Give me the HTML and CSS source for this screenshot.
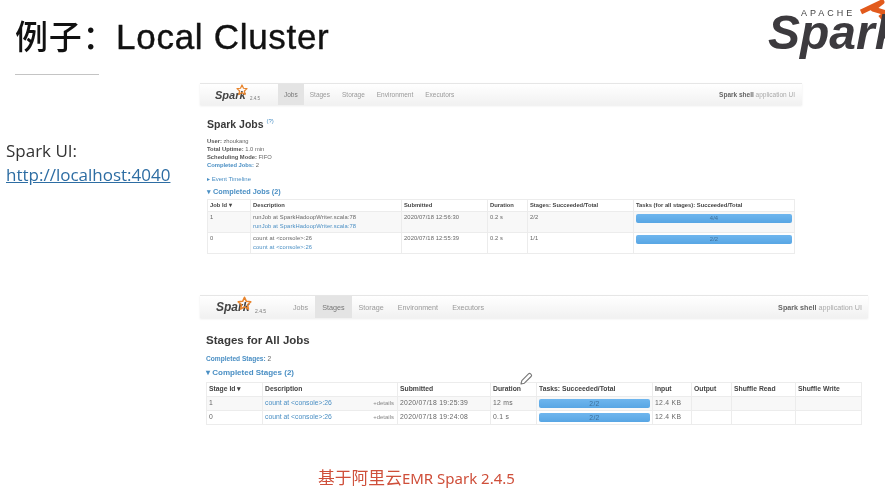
FILE: index.html
```html
<!DOCTYPE html>
<html lang="zh-CN">
<head>
    <meta charset="UTF-8">
    <title>例子&#xFF1A;Local Cluster</title>
    <link rel="stylesheet" href="styles.css">
</head>
<body>
<svg class="defs" width="0" height="0">
    <symbol id="star" viewBox="0 0 24 24">
        <path d="M12 2l3 6.500 7 .8-5.200 4.700 1.500 7L12 17.300l-6.300 3.700 1.500-7L2 9.300l7-.8z" fill="none" stroke="#e8842c" stroke-width="2.500" stroke-linejoin="round"/>
    </symbol>
</svg>
<div class="slide">
    <header class="top">
        <div class="heading">
            <h1 class="title"><span class="title-cjk">例子&#xFF1A;</span>Local Cluster</h1>
            <div class="rule"></div>
        </div>
        <div class="logo">
            <svg class="logo-flame" width="32" height="20" viewBox="0 0 32 20">
                <path d="M3 12L24 2l-9 7 13 4-6 5" fill="none" stroke="#e25a1c" stroke-width="5" stroke-linejoin="round"/>
            </svg>
            <span class="logo-apache">APACHE</span>
            <span class="logo-spark">Spark</span>
        </div>
    </header>

    <div class="main">
        <aside class="side">
            <p>Spark UI:</p>
            <a href="#">http://localhost:4040</a>
        </aside>

        <div class="shots">
            <section class="shot jobs">
                <nav class="nav">
                    <div class="brand">
                        <span class="brand-word">Spark</span>
                        <svg class="brand-star"><use href="#star"/></svg>
                        <span class="brand-ver">2.4.5</span>
                    </div>
                    <a class="tab on">Jobs</a>
                    <a class="tab">Stages</a>
                    <a class="tab">Storage</a>
                    <a class="tab">Environment</a>
                    <a class="tab">Executors</a>
                    <span class="app"><b>Spark shell</b> application UI</span>
                </nav>
                <div class="body">
                    <h2>Spark Jobs <sup>(?)</sup></h2>
                    <ul class="info">
                        <li><b>User:</b> zhoukang</li>
                        <li><b>Total Uptime:</b> 1.0 min</li>
                        <li><b>Scheduling Mode:</b> FIFO</li>
                        <li><a><b>Completed Jobs:</b></a> 2</li>
                    </ul>
                    <p class="timeline"><a>▸ Event Timeline</a></p>
                    <h4><a>▾ Completed Jobs (2)</a></h4>
                    <table>
                        <colgroup>
                            <col class="j1"><col class="j2"><col class="j3"><col class="j4"><col class="j5"><col>
                        </colgroup>
                        <tr>
                            <th>Job Id ▾</th><th>Description</th><th>Submitted</th><th>Duration</th><th>Stages: Succeeded/Total</th><th>Tasks (for all stages): Succeeded/Total</th>
                        </tr>
                        <tr class="odd">
                            <td>1</td>
                            <td>runJob at SparkHadoopWriter.scala:78<br><a>runJob at SparkHadoopWriter.scala:78</a></td>
                            <td>2020/07/18 12:56:30</td><td>0.2 s</td><td>2/2</td>
                            <td><div class="bar">4/4</div></td>
                        </tr>
                        <tr>
                            <td>0</td>
                            <td>count at &lt;console&gt;:26<br><a>count at &lt;console&gt;:26</a></td>
                            <td>2020/07/18 12:55:39</td><td>0.2 s</td><td>1/1</td>
                            <td><div class="bar">2/2</div></td>
                        </tr>
                    </table>
                </div>
            </section>

            <section class="shot stages">
                <nav class="nav">
                    <div class="brand">
                        <span class="brand-word">Spark</span>
                        <svg class="brand-star"><use href="#star"/></svg>
                        <span class="brand-ver">2.4.5</span>
                    </div>
                    <a class="tab">Jobs</a>
                    <a class="tab on">Stages</a>
                    <a class="tab">Storage</a>
                    <a class="tab">Environment</a>
                    <a class="tab">Executors</a>
                    <span class="app"><b>Spark shell</b> application UI</span>
                </nav>
                <div class="body">
                    <h2>Stages for All Jobs</h2>
                    <ul class="info">
                        <li><a><b>Completed Stages:</b></a> 2</li>
                    </ul>
                    <h4><a>▾ Completed Stages (2)</a></h4>
                    <table>
                        <colgroup>
                            <col class="s1"><col class="s2"><col class="s3"><col class="s4"><col class="s5"><col class="s6"><col class="s7"><col class="s8"><col>
                        </colgroup>
                        <tr>
                            <th>Stage Id ▾</th><th>Description</th><th>Submitted</th><th>Duration</th><th>Tasks: Succeeded/Total</th><th>Input</th><th>Output</th><th>Shuffle Read</th><th>Shuffle Write</th>
                        </tr>
                        <tr class="odd">
                            <td>1</td>
                            <td><div class="desc"><a>count at &lt;console&gt;:26</a><span>+details</span></div></td>
                            <td>2020/07/18 19:25:39</td><td>12 ms</td>
                            <td><div class="bar">2/2</div></td>
                            <td>12.4 KB</td><td></td><td></td><td></td>
                        </tr>
                        <tr>
                            <td>0</td>
                            <td><div class="desc"><a>count at &lt;console&gt;:26</a><span>+details</span></div></td>
                            <td>2020/07/18 19:24:08</td><td>0.1 s</td>
                            <td><div class="bar">2/2</div></td>
                            <td>12.4 KB</td><td></td><td></td><td></td>
                        </tr>
                    </table>
                </div>
                <svg class="pencil" width="14" height="14" viewBox="0 0 14 14">
                    <path d="M2 12l.8-3.400L9.500 1.900a1.500 1.500 0 0 1 2.100 0l.5.5a1.500 1.500 0 0 1 0 2.100L5.400 11.200z" fill="#fff" stroke="#777" stroke-width="1.100" stroke-linejoin="round"/>
                </svg>
            </section>

            <p class="caption"><span class="caption-cjk">基于阿里云</span>EMR Spark 2.4.5</p>
        </div>
    </div>
</div>
</body>
</html>
```

FILE: styles.css
```css
html, body {
    margin: 0;
    padding: 0;
    background: #fff;
}

.defs {
    display: block;
    height: 0;
}

.slide {
    width: 885px;
    height: 490px;
    overflow: hidden;
    font-family: "Liberation Sans", "Noto Sans CJK SC", sans-serif;
    filter: blur(0.5px);
}

/* top of the slide */
.top {
    display: flex;
    justify-content: space-between;
    height: 83px;
}

.heading {
    padding: 15px 0 0 15px;
}

.title {
    margin: 0;
    font-size: 35px;
    line-height: 40px;
    font-weight: 400;
    letter-spacing: 0.7px;
    color: #111;
    -webkit-text-stroke: 0.4px #111;
}

.title-cjk {
    font-family: "Noto Sans CJK SC", sans-serif;
    font-size: 33px;
    font-weight: 500;
    -webkit-text-stroke: 0;
}

.rule {
    width: 84px;
    height: 1px;
    margin-top: 17px;
    background: #c4c4c4;
}

.logo {
    position: relative;
    width: 117px;
    height: 62px;
    overflow: hidden;
}

.logo-flame {
    position: absolute;
    left: 90px;
    top: 0;
}

.logo-apache {
    position: absolute;
    left: 33px;
    top: 9px;
    font-size: 9px;
    line-height: 9px;
    letter-spacing: 3px;
    color: #444;
}

.logo-spark {
    position: absolute;
    left: 0;
    top: 18px;
    font-size: 48px;
    line-height: 30px;
    font-style: italic;
    font-weight: 700;
    color: #3c3a3e;
}

/* left column + screenshots */
.main {
    display: flex;
}

.side {
    width: 200px;
    flex: none;
    padding: 56px 0 0 6px;
    box-sizing: border-box;
    font-family: "Open Sans", sans-serif;
    font-size: 17px;
    line-height: 24px;
    color: #333;
}

.side p {
    margin: 0;
}

.side a {
    color: #2d6da3;
    text-decoration: underline;
}

.shots {
    flex: 1;
    min-width: 0;
}

/* the two Spark UI screenshots */
.shot {
    color: #666;
}

.shot a {
    color: #4a8fc4;
}

.nav {
    display: flex;
    align-items: stretch;
    box-sizing: border-box;
    background: linear-gradient(#fff, #f1f1f1);
    border-top: 1px solid #e6e6e6;
    box-shadow: 0 1px 2px rgba(0, 0, 0, 0.08);
}

.brand {
    position: relative;
    flex: none;
}

.brand-word {
    position: absolute;
    font-style: italic;
    font-weight: 700;
    color: #444;
}

.brand-star {
    position: absolute;
}

.brand-ver {
    position: absolute;
    color: #777;
}

.tab {
    display: flex;
    align-items: center;
    color: #999 !important;
}

.tab.on {
    background: #e4e4e4;
    color: #777 !important;
}

.app {
    margin-left: auto;
    align-self: center;
    color: #aaa;
}

.app b {
    color: #666;
}

.shot h2 {
    margin: 0;
    font-weight: 700;
    color: #3a3a3a;
}

.shot h2 sup {
    font-size: 6px;
    font-weight: 400;
    color: #4a8fc4;
}

.info {
    margin: 0;
    padding: 0;
    list-style: none;
}

.info b {
    color: #555;
}

.info a b {
    color: #4a8fc4;
}

.timeline {
    margin: 0;
}

.shot h4 {
    margin: 0;
    font-weight: 700;
}

.shot table {
    border-collapse: collapse;
    table-layout: fixed;
}

.shot th, .shot td {
    border: 1px solid #ececec;
    text-align: left;
    vertical-align: top;
    overflow: hidden;
    white-space: nowrap;
}

.shot th {
    color: #444;
}

.shot tr.odd td {
    background: #f8f8f8;
}

.bar {
    background: linear-gradient(#6fb6ee, #58a6e4);
    border-radius: 2px;
    text-align: center;
    color: #3d6f99;
}

.desc {
    display: flex;
    justify-content: space-between;
    letter-spacing: 0;
}

.desc span {
    padding-right: 1px;
    font-size: 6px;
    color: #888;
}

/* first screenshot: Jobs */
.jobs {
    width: 602px;
    height: 212px;
}

.jobs .nav {
    height: 22px;
    font-size: 6.500px;
}

.jobs .brand {
    width: 78px;
}

.jobs .brand-word {
    left: 15px;
    top: 2px;
    font-size: 11px;
    line-height: 18px;
}

.jobs .brand-star {
    left: 36px;
    top: 0;
    width: 12px;
    height: 12px;
}

.jobs .brand-ver {
    left: 50px;
    top: 12px;
    font-size: 4.500px;
}

.jobs .tab {
    padding: 0 6px;
}

.jobs .app {
    margin-right: 7px;
}

.jobs .body {
    padding: 8px 7px 0;
}

.jobs h2 {
    font-size: 10.500px;
    line-height: 16px;
}

.jobs .info {
    margin-top: 5px;
    font-size: 5.800px;
    line-height: 8.300px;
}

.jobs .timeline {
    margin-top: 5px;
    font-size: 6px;
    line-height: 8px;
}

.jobs h4 {
    margin-top: 4px;
    font-size: 7.300px;
    line-height: 9px;
}

.jobs table {
    width: 588px;
    margin-top: 3px;
    font-size: 5.800px;
    line-height: 8.500px;
}

.jobs td {
    letter-spacing: 0.1px;
    height: 15px;
    padding: 1px 2px 2px;
}

.jobs th {
    height: 7px;
    padding: 1px 2px 2px;
}

.jobs .bar {
    height: 9px;
    line-height: 9px;
    margin-top: 1px;
}

.j1 { width: 43px; }
.j2 { width: 151px; }
.j3 { width: 86px; }
.j4 { width: 40px; }
.j5 { width: 106px; }

/* second screenshot: Stages */
.stages {
    position: relative;
    width: 668px;
    height: 172px;
}

.stages .nav {
    height: 23px;
    font-size: 7.200px;
}

.stages .brand {
    width: 86px;
}

.stages .brand-word {
    left: 16px;
    top: 2px;
    font-size: 12px;
    line-height: 18px;
}

.stages .brand-star {
    left: 37px;
    top: 0;
    width: 15px;
    height: 15px;
}

.stages .brand-ver {
    left: 55px;
    top: 12px;
    font-size: 5px;
}

.stages .tab {
    padding: 0 7px;
}

.stages .app {
    margin-right: 6px;
}

.stages .body {
    padding: 14px 6px 0;
}

.stages h2 {
    font-size: 11.500px;
    line-height: 16px;
}

.stages .info {
    margin-top: 7px;
    font-size: 6.600px;
    line-height: 8px;
}

.stages h4 {
    margin-top: 5px;
    font-size: 8px;
    line-height: 10px;
}

.stages table {
    width: 656px;
    margin-top: 4px;
    font-size: 6.800px;
    line-height: 8px;
}

.stages td {
    letter-spacing: 0.3px;
    height: 9px;
    padding: 2px;
}

.stages th {
    height: 9px;
    padding: 2px;
}

.stages .bar {
    height: 9px;
    line-height: 9px;
}

.s1 { width: 56px; }
.s2 { width: 135px; }
.s3 { width: 93px; }
.s4 { width: 46px; }
.s5 { width: 116px; }
.s6 { width: 39px; }
.s7 { width: 40px; }
.s8 { width: 64px; }

.pencil {
    position: absolute;
    left: 319px;
    top: 77px;
}

.caption {
    margin: 0;
    padding: 0 0 0 118px;
    font-family: "Noto Sans", "Noto Sans CJK SC", sans-serif;
    font-size: 15px;
    line-height: 20px;
    color: #cf4f3a;
}

.caption-cjk {
    font-family: "Noto Sans CJK SC", sans-serif;
    font-size: 16.800px;
}
```
